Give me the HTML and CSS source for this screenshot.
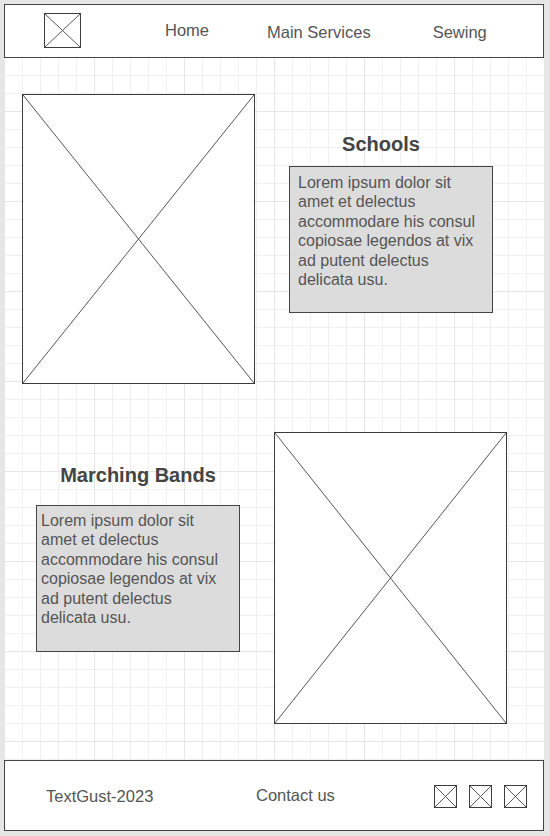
FILE: index.html
```html
<!DOCTYPE html>
<html lang="en">
<head>
    <meta charset="UTF-8">
    <meta name="viewport" content="width=device-width, initial-scale=1.0">
    <title>TextGust</title>
    <link rel="stylesheet" href="styles.css">
</head>
<body>
    <div class="page">
        <!-- Header -->
        <header class="header">
            <div class="ph logo"><svg viewBox="0 0 10 10" preserveAspectRatio="none"><line x1="0" y1="0" x2="10" y2="10"/><line x1="10" y1="0" x2="0" y2="10"/></svg></div>
            <nav class="nav">
                <a href="#" class="nav-home">Home</a>
                <a href="#" class="nav-services">Main Services</a>
                <a href="#" class="nav-sewing">Sewing</a>
            </nav>
        </header>

        <main class="main">
            <!-- Schools -->
            <section class="row row-one">
                <div class="ph picture"><svg viewBox="0 0 10 10" preserveAspectRatio="none"><line x1="0" y1="0" x2="10" y2="10"/><line x1="10" y1="0" x2="0" y2="10"/></svg></div>
                <div class="column column-right">
                    <h2 class="title title-schools">Schools</h2>
                    <p class="text-box box-one">Lorem ipsum dolor sit amet et delectus accommodare his consul copiosae legendos at vix ad putent delectus delicata usu.</p>
                </div>
            </section>

            <!-- Marching Bands -->
            <section class="row row-two">
                <div class="column column-left">
                    <h2 class="title title-bands">Marching Bands</h2>
                    <p class="text-box box-two">Lorem ipsum dolor sit amet et delectus accommodare his consul copiosae legendos at vix ad putent delectus delicata usu.</p>
                </div>
                <div class="ph picture picture-two"><svg viewBox="0 0 10 10" preserveAspectRatio="none"><line x1="0" y1="0" x2="10" y2="10"/><line x1="10" y1="0" x2="0" y2="10"/></svg></div>
            </section>
        </main>

        <!-- Footer -->
        <footer class="footer">
            <span class="copy">TextGust-2023</span>
            <a href="#" class="contact">Contact us</a>
            <div class="socials">
                <div class="ph social"><svg viewBox="0 0 10 10" preserveAspectRatio="none"><line x1="0" y1="0" x2="10" y2="10"/><line x1="10" y1="0" x2="0" y2="10"/></svg></div>
                <div class="ph social"><svg viewBox="0 0 10 10" preserveAspectRatio="none"><line x1="0" y1="0" x2="10" y2="10"/><line x1="10" y1="0" x2="0" y2="10"/></svg></div>
                <div class="ph social"><svg viewBox="0 0 10 10" preserveAspectRatio="none"><line x1="0" y1="0" x2="10" y2="10"/><line x1="10" y1="0" x2="0" y2="10"/></svg></div>
            </div>
        </footer>
    </div>
</body>
</html>
```

FILE: styles.css
```css
* {
    box-sizing: border-box;
}
body {
    margin: 0;
    background-color: #e6e6e6;
    font-family: "Liberation Sans", Arial, sans-serif;
    color: #555;
}
.page {
    margin: 4px 0 0 4px;
    width: 541px;
    height: 828px;
    background-color: #fff;
    background-image:
        linear-gradient(to right, #e6e6e6 1px, transparent 1px),
        linear-gradient(to bottom, #e6e6e6 1px, transparent 1px),
        linear-gradient(to right, #f0f0f0 1px, transparent 1px),
        linear-gradient(to bottom, #f0f0f0 1px, transparent 1px);
    background-size: 90px 90px, 90px 90px, 18px 18px, 18px 18px;
    background-position: 0 17px, 0 17px, 0 17px, 0 17px;
}

/* placeholder image: box with a cross */
.ph {
    border: 1px solid #3c3c3c;
    background: #fff;
}
.ph svg {
    display: block;
    width: 100%;
    height: 100%;
}
.ph line {
    stroke: #555;
    stroke-width: 1;
    vector-effect: non-scaling-stroke;
}

/* header */
.header {
    display: flex;
    align-items: center;
    width: 540px;
    height: 54px;
    border: 1px solid #444;
    background: #fff;
}
.logo {
    width: 37px;
    height: 35px;
    margin-left: 39px;
    margin-top: -1px;
}
.nav {
    display: flex;
}
.nav a {
    color: #555;
    text-decoration: none;
    font-size: 16.5px;
    margin-top: 3px;
}
.nav .nav-home {
    margin-left: 84px;
    margin-top: 1px;
}
.nav .nav-services {
    margin-left: 58px;
}
.nav .nav-sewing {
    margin-left: 62px;
}

/* content */
.main {
    height: 702px;
}
.row {
    display: flex;
    align-items: flex-start;
}
.row-one {
    padding-top: 36px;
}
.row-two {
    padding-top: 48px;
}
.picture {
    width: 233px;
    height: 290px;
    margin-left: 18px;
}
.picture-two {
    height: 292px;
    margin-left: 34px;
}
.column {
    width: 204px;
}
.column-right {
    margin-left: 34px;
}
.column-left {
    margin-left: 32px;
}
.title {
    margin: 0;
    font-size: 20px;
    line-height: 24px;
    font-weight: bold;
    color: #444;
    text-align: center;
}
.title-schools {
    margin-top: 38px;
    padding-right: 20px;
}
.title-bands {
    margin-top: 31px;
}
.text-box {
    height: 147px;
    margin: 0;
    background-color: #dcdcdc;
    border: 1px solid #444;
    font-size: 16px;
    line-height: 19.4px;
    color: #555;
}
.box-one {
    margin-top: 10px;
    padding: 6px 11px 6px 8px;
}
.box-two {
    margin-top: 18px;
    padding: 5px 15px 6px 4px;
}

/* footer */
.footer {
    display: grid;
    grid-template-columns: 210px 178px auto;
    align-items: center;
    width: 540px;
    height: 71px;
    padding-left: 41px;
    border: 1px solid #444;
    background: #fff;
    font-size: 16.5px;
}
.copy {
    margin-top: 2px;
}
.contact {
    color: #555;
    text-decoration: none;
}
.socials {
    display: flex;
    gap: 12px;
    margin-top: 1px;
}
.social {
    width: 23px;
    height: 23px;
}
```
